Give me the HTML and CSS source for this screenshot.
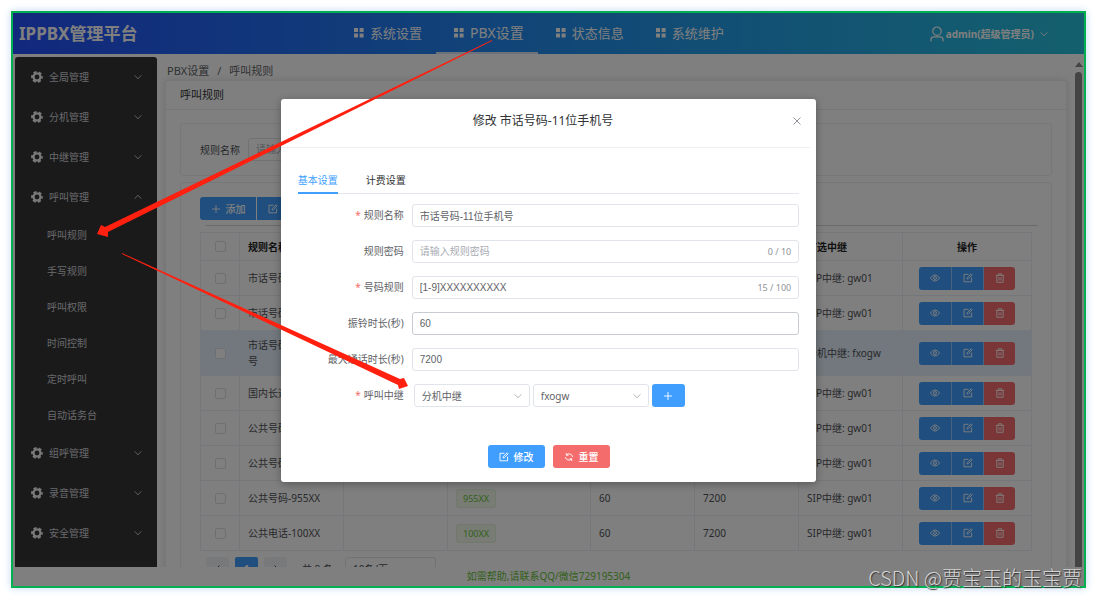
FILE: index.html
```html
<!DOCTYPE html>
<html lang="zh-CN">
<head>
<meta charset="utf-8">
<title>IPPBX管理平台</title>
<link rel="stylesheet" href="styles.css">
</head>
<body>
<svg class="defs" aria-hidden="true">
  <symbol id="grid" viewBox="0 0 10 10"><path fill="currentColor" d="M0 0h4v4H0zM5.6 0h4v4h-4zM0 5.6h4v4H0zM5.6 5.6h4v4h-4z"/></symbol>
  <symbol id="gear" viewBox="0 0 12 12"><g fill="none" stroke="currentColor"><circle cx="6" cy="6" r="3.5" stroke-width="2.2"/><circle cx="6" cy="6" r="5" stroke-width="1.8" stroke-dasharray="3.1 2.136" stroke-dashoffset="1.55"/></g></symbol>
  <symbol id="down" viewBox="0 0 10 10"><path fill="none" stroke="currentColor" stroke-width=".9" d="M1.5 3.3 5 6.7 8.5 3.3"/></symbol>
  <symbol id="up" viewBox="0 0 10 10"><path fill="none" stroke="currentColor" stroke-width=".9" d="M1.5 6.7 5 3.3 8.5 6.7"/></symbol>
  <symbol id="left" viewBox="0 0 10 10"><path fill="none" stroke="currentColor" d="M6.5 1.5 3 5l3.5 3.5"/></symbol>
  <symbol id="right" viewBox="0 0 10 10"><path fill="none" stroke="currentColor" d="M3.5 1.5 7 5 3.5 8.5"/></symbol>
  <symbol id="plus" viewBox="0 0 10 10"><path fill="none" stroke="currentColor" stroke-width=".9" d="M5 1v8M1 5h8"/></symbol>
  <symbol id="cross" viewBox="0 0 10 10"><path fill="none" stroke="currentColor" d="m1.5 1.5 7 7M8.5 1.5l-7 7"/></symbol>
  <symbol id="edit" viewBox="0 0 10 10"><path fill="none" stroke="currentColor" stroke-width=".9" d="M5.5 1.3H1v7.5h7.6V4.6M4 6l.3-1.4L8.2.8l1 1L5.4 5.7z"/></symbol>
  <symbol id="eye" viewBox="0 0 10 10"><g fill="none" stroke="currentColor" stroke-width=".9"><path d="M.4 5Q5-1.2 9.6 5 5 11.2.4 5z"/><circle cx="5" cy="5" r="1.5"/></g></symbol>
  <symbol id="trash" viewBox="0 0 10 10"><path fill="none" stroke="currentColor" stroke-width=".9" d="M.8 2.4h8.4M3.4 2.2V.8h3.2v1.4M1.8 2.6v6.7h6.4V2.6M4 4.3v3.2M6 4.3v3.2"/></symbol>
  <symbol id="refresh" viewBox="0 0 10 10"><path fill="none" stroke="currentColor" stroke-width=".9" d="M2.3 1v2.2h2.2M2.4 3A3.6 3.6 0 0 1 8.6 5M7.7 9V6.8H5.5M7.6 7A3.6 3.6 0 0 1 1.4 5"/></symbol>
  <symbol id="user" viewBox="0 0 14 16"><g fill="none" stroke="currentColor" stroke-width="1.2"><circle cx="7" cy="5.2" r="4.2"/><path d="M1 15.5v-2q0-2.6 3-2.6h6q3 0 3 2.6v2"/></g></symbol>
</svg>

<div class="frame">
  <header class="topbar">
    <h1 class="brand">IPPBX管理平台</h1>
    <nav class="topnav">
      <a href="#"><svg><use href="#grid"/></svg>系统设置</a>
      <a href="#" class="active"><svg><use href="#grid"/></svg>PBX设置</a>
      <a href="#"><svg><use href="#grid"/></svg>状态信息</a>
      <a href="#"><svg><use href="#grid"/></svg>系统维护</a>
    </nav>
    <button class="account"><svg class="person"><use href="#user"/></svg>admin(超级管理员)<svg class="caret"><use href="#down"/></svg></button>
  </header>

  <div class="workspace">
    <nav class="sidebar">
      <a class="group" href="#"><svg class="gear"><use href="#gear"/></svg><span>全局管理</span><svg><use href="#down"/></svg></a>
      <a class="group" href="#"><svg class="gear"><use href="#gear"/></svg><span>分机管理</span><svg><use href="#down"/></svg></a>
      <a class="group" href="#"><svg class="gear"><use href="#gear"/></svg><span>中继管理</span><svg><use href="#down"/></svg></a>
      <a class="group" href="#"><svg class="gear"><use href="#gear"/></svg><span>呼叫管理</span><svg><use href="#up"/></svg></a>
      <a class="sub" href="#">呼叫规则</a>
      <a class="sub" href="#">手写规则</a>
      <a class="sub" href="#">呼叫权限</a>
      <a class="sub" href="#">时间控制</a>
      <a class="sub" href="#">定时呼叫</a>
      <a class="sub" href="#">自动话务台</a>
      <a class="group" href="#"><svg class="gear"><use href="#gear"/></svg><span>组呼管理</span><svg><use href="#down"/></svg></a>
      <a class="group" href="#"><svg class="gear"><use href="#gear"/></svg><span>录音管理</span><svg><use href="#down"/></svg></a>
      <a class="group" href="#"><svg class="gear"><use href="#gear"/></svg><span>安全管理</span><svg><use href="#down"/></svg></a>
    </nav>

    <main class="content">
      <div class="crumbs"><span>PBX设置</span><span>/</span><span>呼叫规则</span></div>
      <section class="page">
        <h2 class="page-title">呼叫规则</h2>
        <div class="page-body">
          <form class="panel search">
            <label for="q">规则名称</label>
            <input id="q" class="field" placeholder="请输入规则名称">
          </form>
          <div class="panel listing">
            <div class="tools">
              <button class="btn blue add"><svg><use href="#plus"/></svg>添加</button>
              <button class="btn blue"><svg><use href="#edit"/></svg>修改</button>
            </div>
            <hr>
            <table class="rules">
              <colgroup><col class="c-check"><col class="c-mid"><col class="c-mid"><col class="c-wide"><col class="c-mid"><col class="c-mid"><col class="c-mid"><col class="c-ops"></colgroup>
              <thead><tr><th class="mid"><input type="checkbox" aria-label="全选"></th><th>规则名称</th><th>规则密码</th><th>号码规则</th><th>振铃时长(秒)</th><th>最大通话时长</th><th>首选中继</th><th class="mid">操作</th></tr></thead>
              <tbody id="rows"></tbody>
            </table>
            <div class="pager">
              <button aria-label="上一页"><svg><use href="#left"/></svg></button>
              <button class="current">1</button>
              <button aria-label="下一页"><svg><use href="#right"/></svg></button>
              <span>共 8 条</span>
              <div class="select"><select aria-label="每页条数"><option>10条/页</option></select><svg><use href="#down"/></svg></div>
            </div>
          </div>
        </div>
      </section>
    </main>
    <div class="scroll"><i class="arrow"></i><i class="thumb"></i></div>
  </div>
  <footer class="help">如需帮助,请联系QQ/微信729195304</footer>

  <div class="mask">
    <div class="dialog" role="dialog" aria-labelledby="dlg-title">
      <header class="dialog-head">
        <h2 id="dlg-title">修改 市话号码-11位手机号</h2>
        <button class="close" aria-label="关闭"><svg><use href="#cross"/></svg></button>
      </header>
      <div class="dialog-body">
        <div class="tabs"><button class="on">基本设置</button><button>计费设置</button></div>
        <form class="form">
          <label class="req" for="name">规则名称</label>
          <div class="control"><input id="name" class="field" value="市话号码-11位手机号"></div>
          <label for="pwd">规则密码</label>
          <div class="control"><input id="pwd" class="field" placeholder="请输入规则密码"><span class="count">0 / 10</span></div>
          <label class="req" for="pattern">号码规则</label>
          <div class="control"><input id="pattern" class="field" value="[1-9]XXXXXXXXXX"><span class="count">15 / 100</span></div>
          <label for="ring">振铃时长(秒)</label>
          <div class="control"><input id="ring" class="field hover" value="60"></div>
          <label for="max">最大通话时长(秒)</label>
          <div class="control"><input id="max" class="field" value="7200"></div>
          <label class="req" for="trunk">呼叫中继</label>
          <div class="control trunks">
            <div class="select"><select id="trunk"><option>分机中继</option></select><svg><use href="#down"/></svg></div>
            <div class="select"><select aria-label="中继名称"><option>fxogw</option></select><svg><use href="#down"/></svg></div>
            <button type="button" class="btn blue" aria-label="添加中继"><svg><use href="#plus"/></svg></button>
          </div>
        </form>
        <div class="actions">
          <button class="btn blue"><svg><use href="#edit"/></svg>修改</button>
          <button class="btn red"><svg><use href="#refresh"/></svg>重置</button>
        </div>
      </div>
    </div>
  </div>
</div>

<svg class="arrows" viewBox="0 0 1097 599" aria-hidden="true">
  <path d="M492 40 105 227 101 225 97 234 108 237 108 232 492 41z"/>
  <path d="M122 253 400 379 404 378 408 386 399 389 398 385 122 254z"/>
</svg>
<div class="credit">CSDN @贾宝玉的玉宝贾</div>
<script src="rows.js"></script>
</body>
</html>
```
FILE: rows.js
```js
const rules = [
  ["市话号码-7位", "[1-9]XXXXXX", "SIP中继: gw01"],
  ["市话号码-8位", "[1-9]XXXXXXX", "SIP中继: gw01"],
  ["市话号码-11位手机号", "[1-9]XXXXXXXXXX", "分机中继: fxogw", true],
  ["国内长途", "0XXXXXXXXX", "SIP中继: gw01"],
  ["公共号码-11X", "11X", "SIP中继: gw01"],
  ["公共号码-12X", "12X", "SIP中继: gw01"],
  ["公共号码-955XX", "955XX", "SIP中继: gw01"],
  ["公共电话-100XX", "100XX", "SIP中继: gw01"]
];
const op = (kind, icon, label) =>
  `<button class="btn ${kind}" aria-label="${label}"><svg><use href="#${icon}"/></svg></button>`;
document.getElementById("rows").innerHTML = rules.map(([name, code, trunk, on]) => `
  <tr class="${on ? "chosen" : ""}">
    <td class="mid"><input type="checkbox" aria-label="${name}"></td>
    <td>${name}</td><td></td><td><span class="tag">${code}</span></td>
    <td>60</td><td>7200</td><td>${trunk}</td>
    <td class="mid"><div class="ops">${op("blue", "eye", "查看")}${op("blue", "edit", "修改")}${op("red", "trash", "删除")}</div></td>
  </tr>`).join("");
```
FILE: styles.css
```css
* { box-sizing: border-box; }
body {
  margin: 0;
  padding: 11px;
  height: 100vh;
  background: #fff;
  color: #606266;
  font: 10px/16px "Noto Sans", "Noto Sans CJK SC", sans-serif;
  overflow: hidden;
}
button, input, select { font: inherit; color: inherit; margin: 0; }
button { border: 0; padding: 0; background: none; }
a { color: inherit; text-decoration: none; }
h1, h2 { margin: 0; font-weight: 400; }
svg { width: 10px; height: 10px; flex: none; }
.defs { position: absolute; width: 0; height: 0; }

.frame {
  position: relative;
  display: flex;
  flex-direction: column;
  height: 100%;
  border: 2px solid #00b050;
  box-shadow: 0 0 8px #c4d8f4;
  background: #fff;
  overflow: hidden;
}

/* top bar */
.topbar {
  display: flex;
  flex: none;
  height: 41px;
  background: linear-gradient(90deg, #2450fa, #2288f0 45%, #28c0dc);
  color: #fff;
}
.brand { width: 323px; padding-left: 6px; font-size: 17px; line-height: 42px; font-weight: 700; }
.topnav { display: flex; }
.topnav a {
  display: flex;
  align-items: center;
  gap: 6px;
  padding: 0 14px 0 18px;
  font-size: 13px;
  border-bottom: 2px solid transparent;
}
.topnav .active { font-size: 14px; border-color: #d8e4f8; }
.account { display: flex; align-items: center; gap: 2px; margin-left: auto; margin-right: 35px; font-weight: 700; }
.person { width: 14px; height: 16px; }
.caret { margin-left: 3px; }

/* sidebar */
.workspace { display: flex; flex: 1; min-height: 0; padding: 3px 0 0 2px; }
.sidebar { flex: none; width: 142px; background: #343434; color: #d0d2d8; border-radius: 3px 3px 0 0; overflow: hidden; }
.group { display: flex; align-items: center; height: 40px; padding: 0 14px 0 16px; }
.group span { flex: 1; padding-left: 6px; }
.group .gear { width: 12px; height: 12px; color: #f4f4f6; }
.sub { display: block; padding-left: 32px; line-height: 36px; }

/* page */
.content { flex: 1; min-width: 0; overflow: hidden; padding-left: 8px; }
.crumbs { display: flex; gap: 8px; height: 23px; padding-left: 2px; font-size: 11px; line-height: 28px; }
.page { margin-right: 6px; border: 1px solid #ebeef5; box-shadow: 0 0 8px rgba(0, 0, 0, .12); color: #505257; }
.page-title { padding-left: 14px; font-size: 11px; line-height: 28px; color: #303133; border-bottom: 1px solid #ebeef5; }
.page-body { display: grid; gap: 6px; padding: 13px 14px; }
.panel { border: 1px solid #ebeef5; border-radius: 3px; padding: 14px 19px; }
.search { display: flex; align-items: center; gap: 8px; height: 53px; }
.field {
  width: 100%;
  height: 23px;
  padding: 0 7px;
  border: 1px solid #e1e4ea;
  border-radius: 3px;
  background: transparent;
  font-family: "Liberation Sans", "Noto Sans CJK SC", sans-serif;
}
.field::placeholder { color: #a8abb2; }
.search .field { width: 150px; }
.btn {
  display: inline-flex;
  align-items: center;
  justify-content: center;
  gap: 5px;
  height: 23px;
  border-radius: 3px;
  color: #fff;
  font-weight: 500;
}
.blue { background: #409eff; }
.red { background: #f56c6c; }
.tools { display: flex; gap: 1px; }
.tools .btn { width: 56px; border-radius: 0 3px 3px 0; }
.tools .add { border-radius: 3px 0 0 3px; }
hr { margin: 5px -6px 6px 6px; border: 0; border-top: 1px solid #d4d7de; }

.rules { width: 100%; table-layout: fixed; border-collapse: collapse; }
.c-check { width: 39px; }
.c-wide { width: 143px; }
.c-ops { width: 129px; }
.rules th, .rules td { height: 35px; padding: 0 8px; border: 1px solid #ebeef5; text-align: left; overflow: hidden; }
.rules th { height: 28px; color: #222; font-weight: 700; }
.rules .mid { text-align: center; }
.rules .chosen td { height: 45px; background: #e4f0fa; }
.rules input { appearance: none; display: block; width: 11px; height: 11px; margin: auto; border: 1px solid #dcdfe6; border-radius: 2px; background: #fff; }
.ops { display: inline-flex; vertical-align: middle; }
.ops .btn { width: 32px; border-radius: 0; border-left: 1px solid #8cc5ff; }
.ops .btn:first-child { border-left: 0; border-radius: 3px 0 0 3px; }
.ops .btn:last-child { border-radius: 0 3px 3px 0; }
.tag { padding: 2px 6px; border: 1px solid #e1f3d8; border-radius: 3px; background: #f0f9eb; color: #67c23a; font-size: 9px; }

.pager { display: flex; align-items: center; gap: 6px; padding: 6px; }
.pager button { display: grid; place-items: center; width: 23px; height: 23px; border-radius: 2px; background: #f0f2f5; }
.pager .current { background: #409eff; color: #fff; font-weight: 700; }
.pager span { margin: 0 6px 0 9px; }
.pager .select { width: 91px; }
.pager select { padding-left: 20px; }

.select { position: relative; width: 116px; height: 23px; }
.select select { appearance: none; width: 100%; height: 100%; padding: 0 7px; border: 1px solid #e1e4ea; border-radius: 3px; background: transparent; }
.select svg { position: absolute; right: 7px; top: 7px; color: #a8abb2; pointer-events: none; }

.scroll { display: flex; flex-direction: column; align-items: center; flex: none; width: 11px; padding: 5px 2px 0; }
.arrow { border: 4px solid transparent; border-top: 0; border-bottom: 5px solid #888; }
.thumb { flex: 1; width: 7px; margin-top: 5px; border-radius: 4px 4px 0 0; background: #888; }
.help { flex: none; height: 19px; line-height: 19px; text-align: center; color: #67c23a; }

/* dialog */
.mask { position: absolute; inset: 0; padding-top: 86px; background: rgba(0, 0, 0, .5); }
.dialog { width: 50%; margin: 0 auto; border-radius: 3px; background: #fff; box-shadow: 0 2px 8px rgba(0, 0, 0, .3); }
.dialog-head { position: relative; height: 49px; margin-right: 6px; border-bottom: 1px solid #eceef2; }
.dialog-head h2 { padding-right: 5px; font-size: 12px; line-height: 44px; text-align: center; color: #303133; }
.close { position: absolute; right: 8px; top: 17px; display: flex; color: #909399; }
.dialog-body { padding: 20px 17px 14px; }
.tabs { display: flex; gap: 28px; border-bottom: 1px solid #e4e7ed; color: #303133; }
.tabs button { height: 26px; margin-bottom: -1px; border-bottom: 2px solid transparent; }
.tabs .on { color: #409eff; border-color: #409eff; }
.form { display: grid; grid-template-columns: auto 1fr; row-gap: 13px; padding: 10px 0 38px; }
.form label { width: 114px; padding-right: 8px; line-height: 23px; text-align: right; white-space: nowrap; }
.req::before { content: "*"; margin-right: 3px; color: #f56c6c; }
.control { position: relative; height: 23px; }
.hover { border-color: #c8cbd2; }
.count { position: absolute; right: 8px; top: 4px; font-size: 9px; color: #909399; }
.trunks { display: flex; gap: 3px; padding-left: 2px; }
.trunks .btn { width: 33px; }
.actions { display: flex; justify-content: center; gap: 8px; }
.actions .btn { width: 57px; }

/* annotations */
.arrows { position: absolute; left: 0; top: 0; width: 100%; height: 100%; fill: #ff2010; pointer-events: none; }
.credit {
  position: absolute;
  right: 15px;
  bottom: 9px;
  font: 300 20px/24px "Noto Sans CJK SC", sans-serif;
  color: #d4d4d4;
  text-shadow: 1px 1px 1px #333;
}
```
